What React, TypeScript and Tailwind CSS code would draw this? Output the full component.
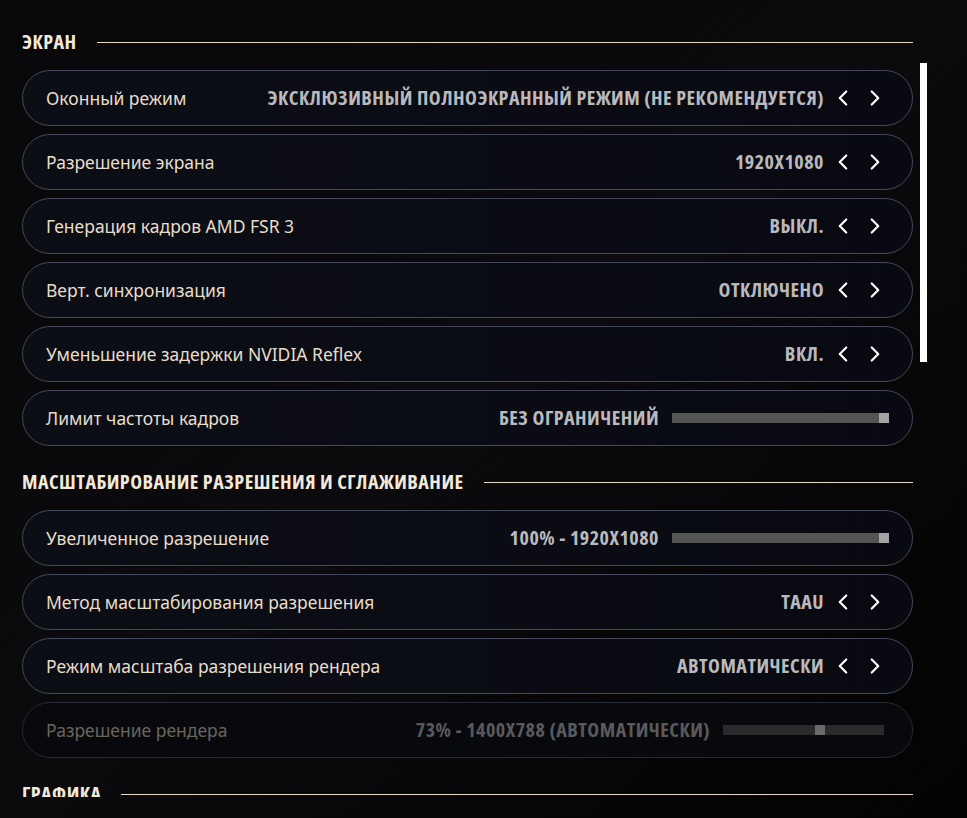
import { ChevronLeft, ChevronRight } from 'lucide-react';

type Row =
  | { label: string; value: string; kind: 'arrows' }
  | { label: string; value: string; kind: 'slider'; pos: number; disabled?: boolean };

const screen: Row[] = [
  { label: 'Оконный режим', value: 'ЭКСКЛЮЗИВНЫЙ ПОЛНОЭКРАННЫЙ РЕЖИМ (НЕ РЕКОМЕНДУЕТСЯ)', kind: 'arrows' },
  { label: 'Разрешение экрана', value: '1920X1080', kind: 'arrows' },
  { label: 'Генерация кадров AMD FSR 3', value: 'ВЫКЛ.', kind: 'arrows' },
  { label: 'Верт. синхронизация', value: 'ОТКЛЮЧЕНО', kind: 'arrows' },
  { label: 'Уменьшение задержки NVIDIA Reflex', value: 'ВКЛ.', kind: 'arrows' },
  { label: 'Лимит частоты кадров', value: 'БЕЗ ОГРАНИЧЕНИЙ', kind: 'slider', pos: 1 },
];

const scaling: Row[] = [
  { label: 'Увеличенное разрешение', value: '100% - 1920X1080', kind: 'slider', pos: 1 },
  { label: 'Метод масштабирования разрешения', value: 'TAAU', kind: 'arrows' },
  { label: 'Режим масштаба разрешения рендера', value: 'АВТОМАТИЧЕСКИ', kind: 'arrows' },
  { label: 'Разрешение рендера', value: '73% - 1400X788 (АВТОМАТИЧЕСКИ)', kind: 'slider', pos: 0.61, disabled: true },
];

// condensed caps used for values and section titles
const condensed = "font-['Open_Sans',sans-serif] [font-stretch:75%] tracking-[0.5px]";

function Header({ title }: { title: string }) {
  return (
    <div className="flex items-center h-6 gap-5">
      <span className={`${condensed} font-bold text-[20px] text-[#f3e9da] whitespace-nowrap`}>
        {title}
      </span>
      <div className="flex-1 h-px bg-[#e6dac6]" />
    </div>
  );
}

function Slider({ pos, disabled }: { pos: number; disabled?: boolean }) {
  const width = disabled ? 161 : 217;
  return (
    <div
      className={`relative h-[10px] ${disabled ? 'bg-[#2a2a2d] w-[161px] mr-[28px]' : 'bg-[#555555] w-[217px] mr-[23px]'}`}
    >
      <div
        className={`absolute top-0 h-[10px] w-[10px] ${disabled ? 'bg-[#6a6a6a]' : 'bg-[#a3a3a3]'}`}
        style={{ left: (width - 10) * pos }}
      />
    </div>
  );
}

function SettingRow({ row }: { row: Row }) {
  const disabled = row.kind === 'slider' && row.disabled;
  return (
    <div
      className={`flex items-center h-14 rounded-full border-[1.5px] pl-[23px] ${
        disabled
          ? 'border-[#262a33] bg-[#08090d]'
          : 'border-[#434958] bg-gradient-to-r from-[#0c0e16] to-[#090a11]'
      }`}
    >
      <span
        className={`font-['Noto_Sans',sans-serif] text-[17.5px] flex-1 whitespace-nowrap ${
          disabled ? 'text-[#6a655d]' : 'text-[#e7dcca]'
        }`}
      >
        {row.label}
      </span>
      <span
        className={`${condensed} font-bold text-[20px] whitespace-nowrap ${
          disabled ? 'text-[#5a5a5d]' : 'text-[#b9b9be]'
        } ${row.kind === 'slider' ? 'mr-[13px]' : 'mr-[6px]'}`}
      >
        {row.value}
      </span>
      {row.kind === 'arrows' ? (
        <div className="flex items-center gap-[6px] mr-[24px] text-white">
          <ChevronLeft size={26} strokeWidth={2} />
          <ChevronRight size={26} strokeWidth={2} />
        </div>
      ) : (
        <Slider pos={row.pos} disabled={row.disabled} />
      )}
    </div>
  );
}

export default function App() {
  return (
    <div className="relative w-[967px] h-[818px] overflow-hidden bg-gradient-to-br from-[#08080a] via-[#0b0b0e] to-[#030303]">
      <div className="h-[797px] overflow-hidden pl-[22px] pr-[54px] pt-[30px]">
        <Header title="ЭКРАН" />
        <div className="flex flex-col gap-2 mt-4">
          {screen.map((r) => (
            <SettingRow key={r.label} row={r} />
          ))}
        </div>
        <div className="mt-6">
          <Header title="МАСШТАБИРОВАНИЕ РАЗРЕШЕНИЯ И СГЛАЖИВАНИЕ" />
        </div>
        <div className="flex flex-col gap-2 mt-4">
          {scaling.map((r) => (
            <SettingRow key={r.label} row={r} />
          ))}
        </div>
        <div className="mt-6">
          <Header title="ГРАФИКА" />
        </div>
      </div>
      <div className="absolute left-[920px] top-[63px] w-[7px] h-[299px] bg-white" />
    </div>
  );
}
